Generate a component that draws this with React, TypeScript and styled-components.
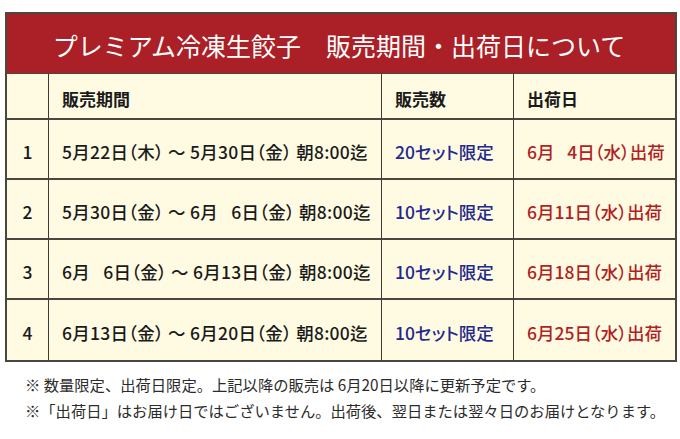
import React from 'react';
import styled, { createGlobalStyle } from 'styled-components';

const GlobalStyle = createGlobalStyle`
  html, body {
    margin: 0;
    padding: 0;
    background: #ffffff;
  }
  body {
    font-family: "Noto Sans CJK JP", "Noto Sans", sans-serif;
  }
`;

interface Row {
  no: string;
  period: string;
  count: string;
  ship: string;
}

const rows: Row[] = [
  { no: '1', period: '5月22日（木） ～ 5月30日（金） 朝8:00迄', count: '20セット限定', ship: '6月\u2002 4日（水）出荷' },
  { no: '2', period: '5月30日（金） ～ 6月\u2002 6日（金） 朝8:00迄', count: '10セット限定', ship: '6月11日（水）出荷' },
  { no: '3', period: '6月\u2002 6日（金） ～ 6月13日（金） 朝8:00迄', count: '10セット限定', ship: '6月18日（水）出荷' },
  { no: '4', period: '6月13日（金） ～ 6月20日（金） 朝8:00迄', count: '10セット限定', ship: '6月25日（水）出荷' },
];

const Page = styled.div`
  width: 680px;
  height: 439px;
  padding: 12px 3px 0 5px;
  box-sizing: border-box;
`;

const Table = styled.div`
  width: 672px;
  box-sizing: border-box;
  border: 2px solid #4a4640;
  background: #fffbe3;
`;

const Title = styled.div`
  height: 60px;
  background: #ab1f26;
  color: #ffffff;
  display: flex;
  align-items: center;
  justify-content: center;
  font-size: 25px;
  font-weight: 400;
  padding: 2px 4px 0 0;
  box-sizing: border-box;
  border-bottom: 1px solid #4a4640;
`;

const Grid = styled.div`
  display: grid;
  grid-template-columns: 42px 333px 132px 1fr;
`;

const Cell = styled.div<{ $height: number; $color?: string; $center?: boolean; $bold?: boolean; $last?: boolean; $end?: boolean; $spread?: boolean }>`
  height: ${(p) => p.$height}px;
  box-sizing: border-box;
  display: flex;
  align-items: center;
  justify-content: ${(p) => (p.$center ? 'center' : 'flex-start')};
  padding-left: ${(p) => (p.$center ? 0 : 13)}px;
  padding-top: 4px;
  border-right: ${(p) => (p.$end ? 'none' : '1.5px solid #3c3832')};
  border-bottom: ${(p) => (p.$last ? 'none' : '2px solid #4a4640')};
  color: ${(p) => p.$color ?? '#1a1a1a'};
  font-size: ${(p) => (p.$bold ? 17 : 17.5)}px;
  font-weight: ${(p) => (p.$bold ? 700 : 500)};
  letter-spacing: ${(p) => (p.$spread ? 0.25 : 0)}px;
  white-space: nowrap;
  font-feature-settings: "palt";
`;

const Notes = styled.div`
  padding: 9px 0 0 20px;
  color: #2b2b2b;
  font-size: 15.3px;
  line-height: 26px;
  white-space: nowrap;
`;

export default function App() {
  return (
    <>
      <GlobalStyle />
      <Page>
        <Table>
          <Title>プレミアム冷凍生餃子　販売期間・出荷日について</Title>
          <Grid>
            <Cell $height={46} $center $bold />
            <Cell $height={46} $bold>販売期間</Cell>
            <Cell $height={46} $bold>販売数</Cell>
            <Cell $height={46} $bold $end>出荷日</Cell>
            {rows.map((r, i) => {
              const last = i === rows.length - 1;
              return (
                <React.Fragment key={r.no}>
                  <Cell $height={60} $center $last={last}>{r.no}</Cell>
                  <Cell $height={60} $last={last} $spread>{r.period}</Cell>
                  <Cell $height={60} $last={last} $color="#1f2a8c">{r.count}</Cell>
                  <Cell $height={60} $last={last} $end $color="#b21f24">{r.ship}</Cell>
                </React.Fragment>
              );
            })}
          </Grid>
        </Table>
        <Notes>
          <div>※ 数量限定、出荷日限定。上記以降の販売は 6月20日以降に更新予定です。</div>
          <div>※「出荷日」はお届け日ではございません。出荷後、翌日または翌々日のお届けとなります。</div>
        </Notes>
      </Page>
    </>
  );
}
